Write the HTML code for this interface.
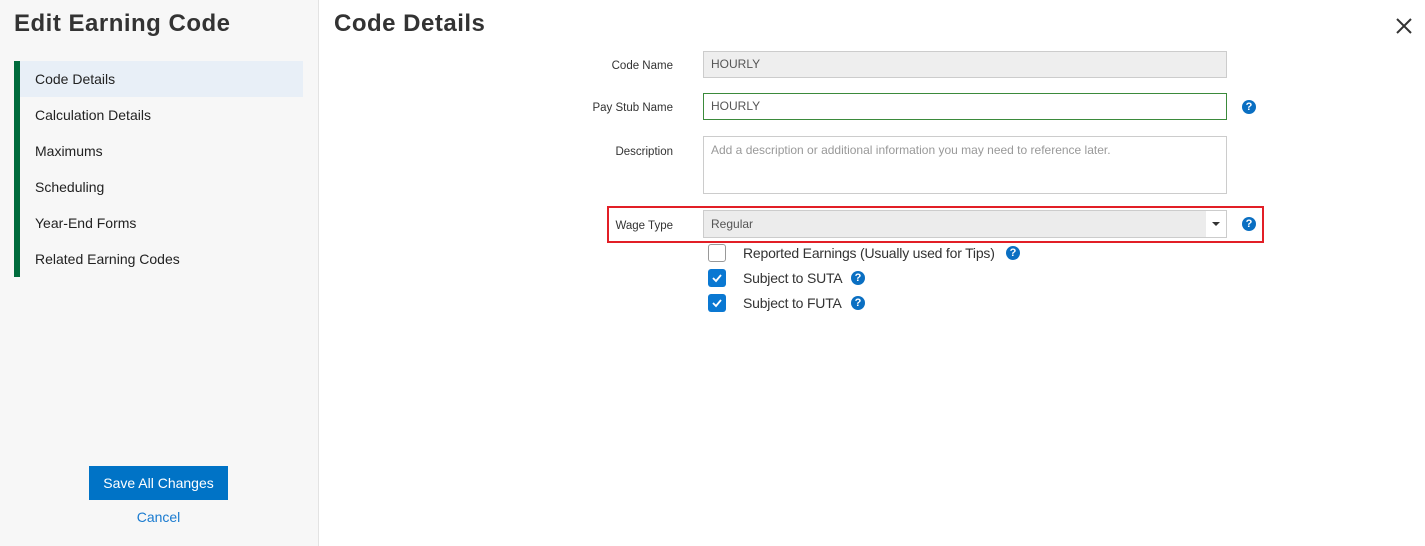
<!DOCTYPE html>
<html><head><style>
*{box-sizing:border-box;margin:0;padding:0}
body{width:1425px;height:546px;background:#fff;font-family:"Liberation Sans",sans-serif;position:relative;overflow:hidden;color:#333}
.side{position:absolute;left:0;top:0;width:319px;height:546px;background:#f7f7f7;border-right:1px solid #e3e3e3}
h1{position:absolute;font-size:24px;font-weight:bold;color:#333;letter-spacing:0.5px}
.bar{position:absolute;left:14px;top:61px;width:6px;height:216px;background:#006b3c}
.item{position:absolute;left:20px;width:283px;height:36px;line-height:36px;padding-left:15px;font-size:14px;color:#222}
.item.act{background:#e8eff7}
.btn{position:absolute;left:89px;top:466px;width:139px;height:34px;background:#0073c6;color:#fff;font-size:14px;text-align:center;line-height:34px}
.cancel{position:absolute;left:89px;width:139px;top:509px;text-align:center;color:#1a7bd0;font-size:14px}
.lbl{position:absolute;right:752px;font-size:11.5px;color:#333}
.inp{position:absolute;left:703px;width:524px;border:1px solid #ccc;font-size:12px;color:#555;padding-left:7px}
.help{position:absolute;width:14px;height:14px;border-radius:50%;background:#0a6fc2;color:#fff;font-size:11px;font-weight:bold;text-align:center;line-height:14px}
.cb{position:absolute;left:708px;width:18px;height:18px;border-radius:3px}
.cb.on{background:#0a78d2}
.cb.off{border:1px solid #999;background:#fff}
.ct{position:absolute;left:743px;font-size:14px;color:#333;letter-spacing:-0.2px}
</style></head><body>
<div class="side">
<h1 style="left:14px;top:10px">Edit Earning Code</h1>
<div class="bar"></div>
<div class="item act" style="top:61px">Code Details</div>
<div class="item" style="top:97px">Calculation Details</div>
<div class="item" style="top:133px">Maximums</div>
<div class="item" style="top:169px">Scheduling</div>
<div class="item" style="top:205px">Year-End Forms</div>
<div class="item" style="top:241px">Related Earning Codes</div>
<div class="btn">Save All Changes</div>
<div class="cancel">Cancel</div>
</div>
<h1 style="left:334px;top:10px">Code Details</h1>
<svg style="position:absolute;left:1395px;top:17px" width="18" height="18"><path d="M2 2L16 16M16 2L2 16" stroke="#333" stroke-width="2"/></svg>

<div class="lbl" style="top:60px">Code Name</div>
<div class="inp" style="top:51px;height:27px;line-height:25px;background:#eee">HOURLY</div>
<div class="lbl" style="top:102px">Pay Stub Name</div>
<div class="inp" style="top:93px;height:27px;line-height:25px;border-color:#3b8a3b">HOURLY</div>
<div class="help" style="left:1242px;top:100px">?</div>
<div class="lbl" style="top:146px">Description</div>
<div class="inp" style="top:136px;height:58px;padding-top:6px;color:#999">Add a description or additional information you may need to reference later.</div>
<div style="position:absolute;left:607px;top:206px;width:657px;height:37px;border:2px solid #e21f26"></div>
<div class="lbl" style="top:220px">Wage Type</div>
<div class="inp" style="top:210px;height:28px;line-height:26px;background:#ececec">Regular<div style="position:absolute;right:0;top:0;width:20px;height:26px;background:#fff"></div><div style="position:absolute;right:6px;top:11px;border-left:4px solid transparent;border-right:4px solid transparent;border-top:4px solid #333"></div></div>
<div class="help" style="left:1242px;top:217px">?</div>
<div class="cb off" style="top:244px"></div>
<div class="ct" style="top:245px">Reported Earnings (Usually used for Tips)</div>
<div class="help" style="left:1006px;top:246px">?</div>
<div class="cb on" style="top:269px"><svg width="18" height="18"><path d="M5 9l3 3 5-6" stroke="#fff" stroke-width="1.8" fill="none"/></svg></div>
<div class="ct" style="top:270px">Subject to SUTA</div>
<div class="help" style="left:851px;top:271px">?</div>
<div class="cb on" style="top:294px"><svg width="18" height="18"><path d="M5 9l3 3 5-6" stroke="#fff" stroke-width="1.8" fill="none"/></svg></div>
<div class="ct" style="top:295px">Subject to FUTA</div>
<div class="help" style="left:851px;top:296px">?</div>
</body></html>
